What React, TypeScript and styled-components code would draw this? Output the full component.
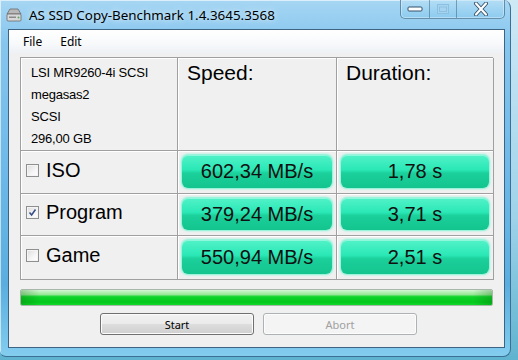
import React, { useState } from 'react';
import styled, { createGlobalStyle } from 'styled-components';

const GlobalStyle = createGlobalStyle`
	html, body {
		margin: 0;
		padding: 0;
		width: 518px;
		height: 360px;
		overflow: hidden;
		background: linear-gradient(180deg, #cfe9f6 0%, #9fd3ea 60%, #5fb3cf 100%);
	}
	* { box-sizing: border-box; }
`;

const rows = [
	{ name: 'ISO', checked: false, speed: '602,34 MB/s', time: '1,78 s' },
	{ name: 'Program', checked: true, speed: '379,24 MB/s', time: '3,71 s' },
	{ name: 'Game', checked: false, speed: '550,94 MB/s', time: '2,51 s' },
];

const App: React.FC = () => {
	const [data] = useState(rows);
	return (
		<>
			<GlobalStyle />
			<Window>
				<TitleBar>
					<AppIcon viewBox="0 0 18 16">
						<path d="M2 7 L5 2 H13 L16 7 Z" fill="#b8b8b8" stroke="#6a6a6a" strokeWidth="0.8" />
						<rect x="2" y="7" width="14" height="7" rx="1" fill="#d8d8d8" stroke="#6a6a6a" strokeWidth="0.8" />
						<rect x="4" y="9.5" width="7" height="1.5" fill="#8a8a8a" />
						<circle cx="13.5" cy="10.5" r="1" fill="#5aa85a" />
					</AppIcon>
					<Title>AS SSD Copy-Benchmark 1.4.3645.3568</Title>
					<CaptionButtons>
						<CaptionButton $w={29}>
							<svg width="16" height="6" viewBox="0 0 16 6">
								<rect x="1" y="1" width="14" height="4" rx="1" fill="#fff" stroke="#33506a" strokeWidth="1" />
							</svg>
						</CaptionButton>
						<CaptionButton $w={27}>
							<svg width="12" height="10" viewBox="0 0 12 10">
								<rect x="0.5" y="0.5" width="11" height="9" fill="#a6d4f0" stroke="#8cc0e0" strokeWidth="1" />
								<rect x="2.5" y="3" width="7" height="4.5" fill="none" stroke="#8cc0e0" strokeWidth="1" />
							</svg>
						</CaptionButton>
						<CaptionButton $w={47} $last>
							<svg width="16" height="14" viewBox="0 0 16 14">
								<path d="M3 1.5 L13 12.5 M13 1.5 L3 12.5" stroke="#33506a" strokeWidth="4" strokeLinecap="round" fill="none" />
								<path d="M3 1.5 L13 12.5 M13 1.5 L3 12.5" stroke="#fff" strokeWidth="2.2" strokeLinecap="round" fill="none" />
							</svg>
						</CaptionButton>
					</CaptionButtons>
				</TitleBar>
				<Client>
					<MenuBar>
						<MenuItem>File</MenuItem>
						<MenuItem>Edit</MenuItem>
					</MenuBar>
					<Content>
						<Table>
							<InfoCell>
								<span>LSI MR9260-4i SCSI</span>
								<span>megasas2</span>
								<span>SCSI</span>
								<span>296,00 GB</span>
							</InfoCell>
							<HeadCell>Speed:</HeadCell>
							<HeadCell>Duration:</HeadCell>
							{data.map((r) => (
								<React.Fragment key={r.name}>
									<LabelCell>
										<Check>
											{r.checked && (
												<svg width="9" height="9" viewBox="0 0 9 9">
													<path d="M1.5 4.5 L3.6 7 L7.5 1.5" stroke="#3a4f8a" strokeWidth="1.6" fill="none" />
												</svg>
											)}
										</Check>
										{r.name}
									</LabelCell>
									<ValueCell>
										<Pill>{r.speed}</Pill>
									</ValueCell>
									<ValueCell>
										<Pill>{r.time}</Pill>
									</ValueCell>
								</React.Fragment>
							))}
						</Table>
						<Progress>
							<ProgressFill style={{ width: '100%' }} />
						</Progress>
						<Buttons>
							<Button>Start</Button>
							<Button disabled>Abort</Button>
						</Buttons>
					</Content>
				</Client>
			</Window>
		</>
	);
};

export default App;

const Window = styled.div`
	width: 511px;
	height: 357px;
	display: flex;
	flex-direction: column;
	padding: 0 5px 8px 8px;
	border: 1px solid #3c6f94;
	border-top: none;
	border-left: none;
	border-radius: 0 8px 8px 6px;
	background: linear-gradient(180deg, #a6d6f3 0%, #86c6ee 12%, #6cb8e8 50%, #5aaedf 80%, #83cdef 100%);
	box-shadow: inset 1px 1px 0 rgba(255, 255, 255, 0.6);
`;

const TitleBar = styled.div`
	height: 29px;
	display: flex;
	align-items: flex-start;
	margin-left: -3px;
`;

const AppIcon = styled.svg`
	width: 18px;
	height: 16px;
	margin: 7px 6px 0 0;
	flex: none;
`;

const Title = styled.span`
	font-family: 'Noto Sans', 'Open Sans', sans-serif;
	font-size: 13.4px;
	line-height: 16px;
	margin-top: 7px;
	color: #000;
	text-shadow: 0 0 6px rgba(255, 255, 255, 0.9);
	flex: 1;
`;

const CaptionButtons = styled.div`
	display: flex;
	height: 19px;
	border: 1px solid rgba(40, 80, 110, 0.55);
	border-top: none;
	border-radius: 0 0 5px 5px;
	overflow: hidden;
	background: linear-gradient(180deg, #b4ddf5 0%, #8ccbef 100%);
	box-shadow: inset 0 0 0 1px rgba(255, 255, 255, 0.35);
`;

const CaptionButton = styled.div<{ $w: number; $last?: boolean }>`
	width: ${(p) => p.$w}px;
	display: flex;
	align-items: center;
	justify-content: center;
	border-right: ${(p) => (p.$last ? 'none' : '1px solid rgba(40, 80, 110, 0.45)')};
`;

const Client = styled.div`
	flex: 1;
	display: flex;
	flex-direction: column;
	background: #f0f0f0;
	border: 1px solid #3d6483;
`;

const MenuBar = styled.div`
	height: 23px;
	display: flex;
	align-items: center;
	padding-left: 14px;
	gap: 18px;
	background: linear-gradient(180deg, #ffffff 0%, #f7f9fb 60%, #eef1f5 100%);
`;

const MenuItem = styled.span`
	font-family: 'Noto Sans', 'Open Sans', sans-serif;
	font-size: 12px;
	color: #000;
`;

const Content = styled.div`
	flex: 1;
	display: flex;
	flex-direction: column;
	padding: 4px 11px 0 11px;
`;

const Table = styled.div`
	display: grid;
	grid-template-columns: 157px 159px 157px;
	grid-template-rows: 93px 43px 42px 44px;
	border-top: 1px solid #a0a0a0;
	border-left: 1px solid #a0a0a0;
	background: #f0f0f0;
`;

const Cell = styled.div`
	border-right: 1px solid #a0a0a0;
	border-bottom: 1px solid #a0a0a0;
	box-shadow: inset 1px 1px 0 #ffffff;
`;

const InfoCell = styled(Cell)`
	display: flex;
	flex-direction: column;
	padding: 4px 0 0 10px;
	font-family: 'Liberation Sans', Arial, sans-serif;
	font-size: 13px;
	line-height: 22px;
	letter-spacing: -0.2px;
	color: #000;
`;

const HeadCell = styled(Cell)`
	padding: 2px 0 0 9px;
	font-family: 'Liberation Sans', Arial, sans-serif;
	font-size: 21px;
	line-height: 26px;
	color: #000;
`;

const LabelCell = styled(Cell)`
	display: flex;
	align-items: center;
	gap: 7px;
	padding: 0 0 4px 5px;
	font-family: 'Liberation Sans', Arial, sans-serif;
	font-size: 20px;
	color: #000;
`;

const Check = styled.span`
	width: 13px;
	height: 13px;
	flex: none;
	display: flex;
	align-items: center;
	justify-content: center;
	border: 1px solid #8f8f8f;
	background: linear-gradient(135deg, #dcdcdc 0%, #f6f6f6 60%, #ffffff 100%);
	box-shadow: inset 0 0 0 1px #f4f4f4;
`;

const ValueCell = styled(Cell)`
	display: flex;
	padding: 4px 4px 5px 4px;
`;

const Pill = styled.div`
	flex: 1;
	display: flex;
	align-items: center;
	justify-content: center;
	border-radius: 6px;
	font-family: 'Liberation Sans', Arial, sans-serif;
	font-size: 20px;
	color: #101010;
	background: linear-gradient(180deg, #52f2c8 0%, #2ae8b6 45%, #1bd09b 55%, #14c48e 100%);
	box-shadow: 0 0 2px 1px #7ff4d6, inset 0 1px 0 #8ff7dc;
`;

const Progress = styled.div`
	margin-top: 9px;
	height: 17px;
	border: 1px solid #a8b8a8;
	border-radius: 2px;
	background: #e6e6e6;
	overflow: hidden;
`;

const ProgressFill = styled.div`
	height: 100%;
	background:
		linear-gradient(90deg, rgba(0, 80, 0, 0.25) 0%, rgba(0, 0, 0, 0) 4%, rgba(0, 0, 0, 0) 96%, rgba(0, 80, 0, 0.25) 100%),
		linear-gradient(180deg, #d4f6d4 0%, #98e898 30%, #0ed42a 45%, #06c81c 80%, #10d82a 100%);
`;

const Buttons = styled.div`
	display: flex;
	gap: 9px;
	padding-left: 80px;
	margin-top: 7px;
`;

const Button = styled.button`
	width: 154px;
	height: 22px;
	padding: 0;
	border: 1px solid #707070;
	border-radius: 3px;
	font-family: 'Noto Sans', 'Open Sans', sans-serif;
	font-size: 11px;
	color: #000;
	background: linear-gradient(180deg, #f2f2f2 0%, #ebebeb 48%, #dddddd 52%, #cfcfcf 100%);
	box-shadow: inset 0 0 0 1px #fcfcfc;
	&:disabled {
		color: #a0a0a0;
		border-color: #adb2b5;
		background: #f4f4f4;
	}
`;
